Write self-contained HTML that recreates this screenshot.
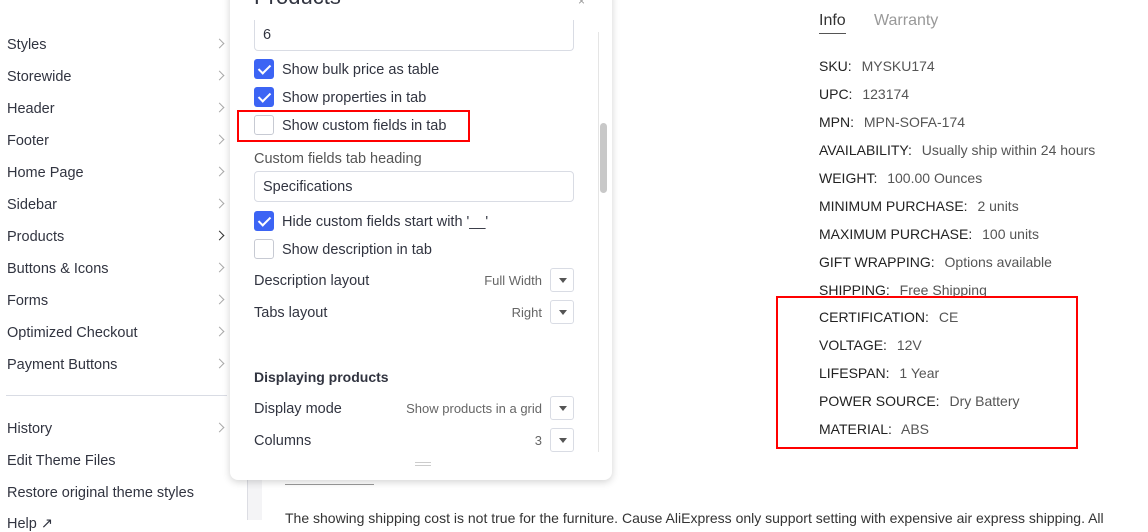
<!DOCTYPE html>
<html><head><meta charset="utf-8"><style>
*{box-sizing:border-box;margin:0;padding:0}
body{width:1148px;height:520px;overflow:hidden;background:#fff;font-family:"Liberation Sans",sans-serif;color:#313440;position:relative;font-size:14.5px}
.abs{position:absolute}
.side div.i{position:absolute;left:7px;font-size:14.5px;color:#313440}
.chev{position:absolute;left:216px;width:7px;height:7px;border-right:1.5px solid #aaa;border-top:1.5px solid #aaa;transform:rotate(45deg)}
.cb{position:absolute;left:254px;width:20px;height:20px;border-radius:3px;background:#3c64f4}
.cb.e{background:#fff;border:1px solid #c7cad3}
.cb:not(.e)::after{content:"";position:absolute;left:7px;top:3px;width:5px;height:10px;border-right:2px solid #fff;border-bottom:2px solid #fff;transform:rotate(45deg)}
.lbl{position:absolute;left:282px;font-size:14.5px}
.inp{position:absolute;left:254px;width:320px;height:31px;border:1px solid #d9dce4;border-radius:4px;padding:7px 8px}
.sel{position:absolute;left:550px;width:24px;height:24px;border:1px solid #d9dce4;border-radius:3px}
.sel::after{content:"";position:absolute;left:8px;top:9px;border-left:4px solid transparent;border-right:4px solid transparent;border-top:5px solid #555}
.sv{position:absolute;right:606px;font-size:13px;color:#666;text-align:right}
.r{position:absolute;left:819px;font-size:14px;color:#555}
.r b{font-weight:normal;color:#222;margin-right:6px}
</style></head><body>
<div class="side">
<div class="i" style="top:37px">Styles</div><div class="chev" style="top:40px"></div>
<div class="i" style="top:69px">Storewide</div><div class="chev" style="top:72px"></div>
<div class="i" style="top:101px">Header</div><div class="chev" style="top:104px"></div>
<div class="i" style="top:133px">Footer</div><div class="chev" style="top:136px"></div>
<div class="i" style="top:165px">Home Page</div><div class="chev" style="top:168px"></div>
<div class="i" style="top:197px">Sidebar</div><div class="chev" style="top:200px"></div>
<div class="i" style="top:229px">Products</div><div class="chev" style="top:232px;border-color:#333"></div>
<div class="i" style="top:261px">Buttons &amp; Icons</div><div class="chev" style="top:264px"></div>
<div class="i" style="top:293px">Forms</div><div class="chev" style="top:296px"></div>
<div class="i" style="top:325px">Optimized Checkout</div><div class="chev" style="top:328px"></div>
<div class="i" style="top:357px">Payment Buttons</div><div class="chev" style="top:360px"></div>
<div class="abs" style="left:6px;top:395px;width:221px;height:1px;background:#d9dce4"></div>
<div class="i" style="top:421px">History</div><div class="chev" style="top:424px"></div>
<div class="i" style="top:453px">Edit Theme Files</div>
<div class="i" style="top:485px">Restore original theme styles</div>
<div class="i" style="top:516px">Help ↗</div>
</div>
<div class="abs" style="left:247px;top:0;width:15px;height:520px;background:#f4f4f6;border-left:1px solid #dcdde3"></div>
<div class="abs" style="left:285px;top:484px;width:89px;height:1px;background:#999"></div>
<div class="abs" style="left:285px;top:510px;font-size:14px;color:#333;white-space:nowrap">The showing shipping cost is not true for the furniture. Cause AliExpress only support setting with expensive air express shipping. All</div>
<div class="abs" style="left:230px;top:-10px;width:382px;height:490px;background:#fff;border-radius:0 0 8px 8px;box-shadow:0 2px 8px rgba(0,0,0,.18)"></div>
<div class="abs" style="left:254px;top:-16px;font-size:22px;color:#313440">Products</div>
<div class="abs" style="left:578px;top:-6px;font-size:12px;color:#999">×</div>
<div class="abs" style="left:598px;top:32px;width:12px;height:420px;border-left:1px solid #e5e5e5"></div>
<div class="abs" style="left:600px;top:123px;width:7px;height:70px;background:#c8c8c8;border-radius:4px"></div>
<div class="inp" style="top:20px;border-top:none;border-radius:0 0 4px 4px">6</div>
<div class="cb" style="top:59px"></div><div class="lbl" style="top:62px">Show bulk price as table</div>
<div class="cb" style="top:87px"></div><div class="lbl" style="top:90px">Show properties in tab</div>
<div class="cb e" style="top:115px"></div><div class="lbl" style="top:118px">Show custom fields in tab</div>
<div class="abs" style="left:237px;top:110px;width:233px;height:32px;border:2px solid #f00"></div>
<div class="abs" style="left:254px;top:151px;color:#555">Custom fields tab heading</div>
<div class="inp" style="top:171px">Specifications</div>
<div class="cb" style="top:211px"></div><div class="lbl" style="top:214px">Hide custom fields start with '__'</div>
<div class="cb e" style="top:239px"></div><div class="lbl" style="top:242px">Show description in tab</div>
<div class="abs" style="left:254px;top:273px">Description layout</div><div class="sv" style="top:273px">Full Width</div><div class="sel" style="top:268px"></div>
<div class="abs" style="left:254px;top:305px">Tabs layout</div><div class="sv" style="top:305px">Right</div><div class="sel" style="top:300px"></div>
<div class="abs" style="left:254px;top:369px;font-weight:bold;font-size:14px">Displaying products</div>
<div class="abs" style="left:254px;top:401px">Display mode</div><div class="sv" style="top:401px">Show products in a grid</div><div class="sel" style="top:396px"></div>
<div class="abs" style="left:254px;top:433px">Columns</div><div class="sv" style="top:433px">3</div><div class="sel" style="top:428px"></div>
<div class="abs" style="left:415px;top:462px;width:16px;height:4px;border-top:1px solid #ccc;border-bottom:1px solid #ccc"></div>
<div class="abs" style="left:819px;top:12px;font-size:16px;color:#333;border-bottom:1px solid #555;padding-bottom:3px">Info</div>
<div class="abs" style="left:874px;top:12px;font-size:16px;color:#999">Warranty</div>
<div class="r" style="top:58px"><b>SKU:</b> MYSKU174</div>
<div class="r" style="top:86px"><b>UPC:</b> 123174</div>
<div class="r" style="top:114px"><b>MPN:</b> MPN-SOFA-174</div>
<div class="r" style="top:142px"><b>AVAILABILITY:</b> Usually ship within 24 hours</div>
<div class="r" style="top:170px"><b>WEIGHT:</b> 100.00 Ounces</div>
<div class="r" style="top:198px"><b>MINIMUM PURCHASE:</b> 2 units</div>
<div class="r" style="top:226px"><b>MAXIMUM PURCHASE:</b> 100 units</div>
<div class="r" style="top:254px"><b>GIFT WRAPPING:</b> Options available</div>
<div class="r" style="top:282px"><b>SHIPPING:</b> Free Shipping</div>
<div class="r" style="top:309px"><b>CERTIFICATION:</b> CE</div>
<div class="r" style="top:337px"><b>VOLTAGE:</b> 12V</div>
<div class="r" style="top:365px"><b>LIFESPAN:</b> 1 Year</div>
<div class="r" style="top:393px"><b>POWER SOURCE:</b> Dry Battery</div>
<div class="r" style="top:421px"><b>MATERIAL:</b> ABS</div>
<div class="abs" style="left:776px;top:296px;width:302px;height:153px;border:2px solid #f00"></div>
</body></html>
